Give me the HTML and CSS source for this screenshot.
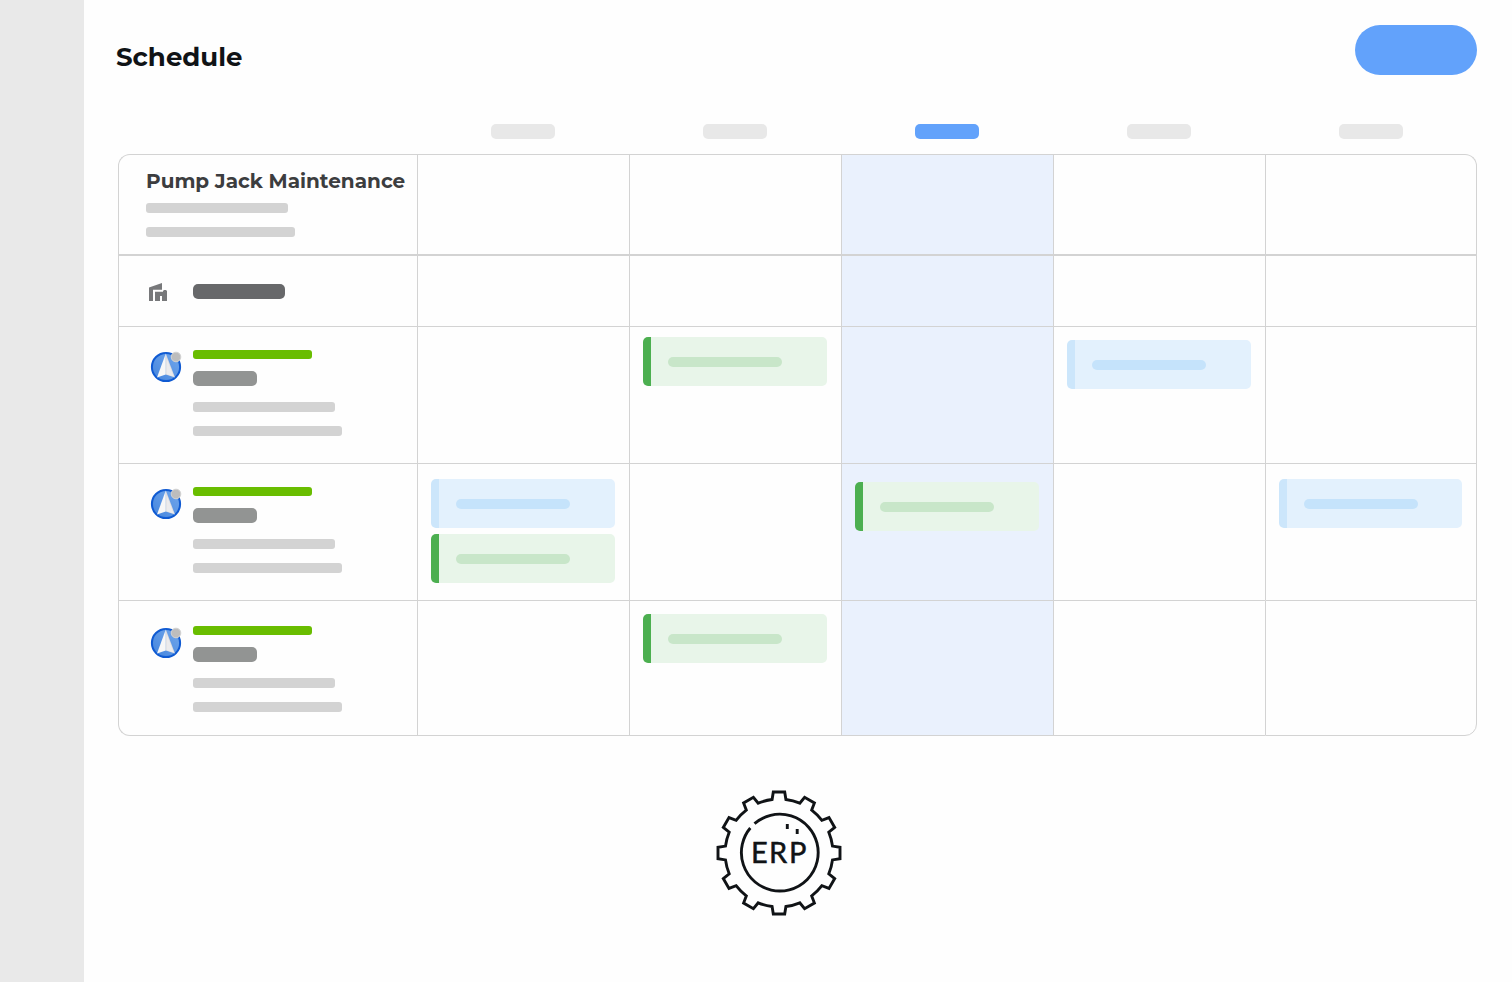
FILE: index.html
```html
<!DOCTYPE html>
<html lang="en">
<head>
    <meta charset="UTF-8">
    <meta name="viewport" content="width=device-width, initial-scale=1.0">
    <title>Schedule</title>
    <link rel="stylesheet" href="styles.css">
</head>
<body>

    <!-- Shared icons -->
    <svg class="sprite" aria-hidden="true">
        <defs>
            <linearGradient id="sky" x1="0" y1="1" x2="1" y2="0">
                <stop offset="0" stop-color="#4384dd"/>
                <stop offset="1" stop-color="#73a8ec"/>
            </linearGradient>
        </defs>
        <symbol id="avatar" viewBox="0 0 32 32">
            <circle cx="16" cy="16" r="14.1" fill="url(#sky)" stroke="#0f5ad2" stroke-width="2"/>
            <path d="M15.8 2.5 L7 26.5 L15.8 23.5 Z" fill="#f7f7f7"/>
            <path d="M15.8 2.5 L25 26.5 L15.8 23.5 Z" fill="#dcdcdf"/>
            <path d="M16.6 7 L23.8 25.5 L16.6 23.2 Z" fill="#ebebed"/>
            <circle cx="26" cy="6" r="4.8" fill="#bdbdbd" stroke="#d2d2d2" stroke-width="1"/>
        </symbol>
    </svg>

    <div class="layout">
        <aside class="sidebar"></aside>

        <main class="main">
            <header class="header">
                <h1>Schedule</h1>
                <button type="button" class="add-btn" aria-label="Add"></button>
            </header>

            <table class="schedule">
                <thead>
                    <tr>
                        <th class="name-col"></th>
                        <th><span class="day"></span></th>
                        <th><span class="day"></span></th>
                        <th><span class="day active"></span></th>
                        <th><span class="day"></span></th>
                        <th><span class="day"></span></th>
                    </tr>
                </thead>
                <tbody>
                    <tr class="job-row">
                        <td class="job">
                            <h2>Pump Jack Maintenance</h2>
                            <div class="lines">
                                <span class="line"></span>
                                <span class="line long"></span>
                            </div>
                        </td>
                        <td></td>
                        <td></td>
                        <td class="today"></td>
                        <td></td>
                        <td></td>
                    </tr>
                    <tr class="site-row">
                        <td>
                            <div class="site">
                                <svg class="site-icon" viewBox="0 0 18 18" aria-hidden="true">
                                    <path d="M0 4.5 L13 0 V6.7 H4 V18 H0 Z"/>
                                    <path d="M6 8.8 H14 V8 L15 7 H17 L18 8 V18 H13 V13 H11 V18 H6 Z"/>
                                </svg>
                                <span class="site-name"></span>
                            </div>
                        </td>
                        <td></td>
                        <td></td>
                        <td class="today"></td>
                        <td></td>
                        <td></td>
                    </tr>
                    <tr class="crew-row">
                        <td>
                            <div class="crew">
                                <svg class="avatar" aria-hidden="true"><use href="#avatar"/></svg>
                                <div class="crew-info">
                                    <span class="status"></span>
                                    <span class="role"></span>
                                    <div class="lines">
                                        <span class="line"></span>
                                        <span class="line long"></span>
                                    </div>
                                </div>
                            </div>
                        </td>
                        <td></td>
                        <td class="tight"><div class="event green"><span></span></div></td>
                        <td class="today"></td>
                        <td><div class="event blue"><span></span></div></td>
                        <td></td>
                    </tr>
                    <tr class="crew-row">
                        <td>
                            <div class="crew">
                                <svg class="avatar" aria-hidden="true"><use href="#avatar"/></svg>
                                <div class="crew-info">
                                    <span class="status"></span>
                                    <span class="role"></span>
                                    <div class="lines">
                                        <span class="line"></span>
                                        <span class="line long"></span>
                                    </div>
                                </div>
                            </div>
                        </td>
                        <td class="loose">
                            <div class="event blue"><span></span></div>
                            <div class="event green"><span></span></div>
                        </td>
                        <td></td>
                        <td class="today low"><div class="event green"><span></span></div></td>
                        <td></td>
                        <td class="loose"><div class="event blue"><span></span></div></td>
                    </tr>
                    <tr class="crew-row last">
                        <td>
                            <div class="crew">
                                <svg class="avatar" aria-hidden="true"><use href="#avatar"/></svg>
                                <div class="crew-info">
                                    <span class="status"></span>
                                    <span class="role"></span>
                                    <div class="lines">
                                        <span class="line"></span>
                                        <span class="line long"></span>
                                    </div>
                                </div>
                            </div>
                        </td>
                        <td></td>
                        <td><div class="event green"><span></span></div></td>
                        <td class="today"></td>
                        <td></td>
                        <td></td>
                    </tr>
                </tbody>
            </table>

            <footer class="footer">
                <svg class="erp" viewBox="-63 -63 126 126" role="img" aria-label="ERP">
                    <g fill="none" stroke="#101316" stroke-width="2.9">
                        <path d="M-6.9-53.5 L-5.7-61 H5.7 L6.9-53.5
                            A54 54 0 0 1 20.8-49.8 L25.6-55.7 L35.4-50 L32.7-42.9
                            A54 54 0 0 1 42.9-32.7 L50-35.4 L55.7-25.6 L49.8-20.8
                            A54 54 0 0 1 53.5-6.9 L61-5.7 V5.7 L53.5 6.9
                            A54 54 0 0 1 49.8 20.8 L55.7 25.6 L50 35.4 L42.9 32.7
                            A54 54 0 0 1 32.7 42.9 L35.4 50 L25.6 55.7 L20.8 49.8
                            A54 54 0 0 1 6.9 53.5 L5.7 61 H-5.7 L-6.9 53.5
                            A54 54 0 0 1 -20.8 49.8 L-25.6 55.7 L-35.4 50 L-32.7 42.9
                            A54 54 0 0 1 -42.9 32.7 L-50 35.4 L-55.7 25.6 L-49.8 20.8
                            A54 54 0 0 1 -53.5 6.9 L-61 5.7 V-5.7 L-53.5-6.9
                            A54 54 0 0 1 -49.8-20.8 L-55.7-25.6 L-50-35.4 L-42.9-32.7
                            A54 54 0 0 1 -32.7-42.9 L-35.4-50 L-25.6-55.7 L-20.8-49.8
                            A54 54 0 0 1 -6.9-53.5 Z"/>
                        <path d="M-24.5-29.3 A38.4 38.4 0 1 1 -28.7-25"/>
                        <path d="M8.3-29 V-24 M18.2-24 V-19"/>
                    </g>
                    <text x="-28 -10 10" y="10">ERP</text>
                </svg>
            </footer>
        </main>
    </div>

</body>
</html>
```
FILE: styles.css
```css
* {
    margin: 0;
    padding: 0;
    box-sizing: border-box;
}

body {
    background: #fefefe;
    color: #101316;
    font-family: Montserrat, Inter, sans-serif;
}

.sprite {
    position: absolute;
    width: 0;
    height: 0;
}

.layout {
    display: flex;
    min-height: 100vh;
}

.sidebar {
    flex: 0 0 84px;
    background: #e9e9e9;
}

.main {
    flex: 1;
    padding: 25px 35px 40px 34px;
}

/* Header */
.header {
    display: flex;
    justify-content: space-between;
    align-items: flex-end;
    margin-left: -2px;
}

h1 {
    font-size: 26px;
    line-height: 36px;
    font-weight: 700;
}

.add-btn {
    width: 122px;
    height: 50px;
    border: none;
    border-radius: 25px;
    background: #62a2fb;
    cursor: pointer;
}

/* Schedule table */
.schedule {
    width: 100%;
    margin-top: 49px;
    table-layout: fixed;
    border-collapse: separate;
    border-spacing: 0;
}

th {
    height: 30px;
    vertical-align: top;
}

.name-col {
    width: 299px;
}

.day {
    display: block;
    width: 64px;
    height: 15px;
    margin: 0 auto;
    border-radius: 5px;
    background: #e8e8e8;
}

.day.active {
    background: #62a2fb;
}

td {
    padding: 13px 14px 0 13px;
    border-top: 1px solid #d3d3d3;
    border-left: 1px solid #d3d3d3;
    vertical-align: top;
}

td:first-child {
    padding: 0 0 0 27px;
}

td:last-child {
    border-right: 1px solid #d3d3d3;
}

.today {
    background: #eaf1fd;
}

.tight {
    padding-top: 10px;
}

.loose {
    padding-top: 15px;
}

.low {
    padding-top: 18px;
}

.job-row td {
    height: 100px;
}

.job-row td:first-child {
    border-top-left-radius: 12px;
}

.job-row td:last-child {
    border-top-right-radius: 12px;
}

.site-row td {
    height: 72px;
    border-top-width: 2px;
}

.crew-row td {
    height: 137px;
}

.crew-row.last td {
    height: 136px;
    border-bottom: 1px solid #d3d3d3;
}

.crew-row.last td:first-child {
    border-bottom-left-radius: 12px;
}

.crew-row.last td:last-child {
    border-bottom-right-radius: 12px;
}

/* First column */
h2 {
    padding-top: 12px;
    margin-bottom: 8px;
    color: #3c3d3f;
    font-size: 20px;
    line-height: 28px;
    font-weight: 700;
    white-space: nowrap;
}

.lines {
    display: flex;
    flex-direction: column;
    gap: 14px;
}

.line {
    width: 142px;
    height: 10px;
    border-radius: 3px;
    background: #d3d3d3;
}

.line.long {
    width: 149px;
}

.site {
    display: flex;
    gap: 26px;
    padding: 27px 0 0 3px;
}

.site-icon {
    width: 18px;
    height: 18px;
    fill: #77787a;
}

.site-name {
    width: 92px;
    height: 15px;
    margin-top: 1px;
    border-radius: 5px;
    background: #67686a;
}

.crew {
    display: flex;
    gap: 11px;
    padding: 23px 0 0 4px;
}

.last .crew {
    padding-top: 25px;
}

.avatar {
    width: 32px;
    height: 32px;
    margin-top: 1px;
}

.crew-info {
    display: flex;
    flex-direction: column;
}

.status {
    width: 119px;
    height: 9px;
    border-radius: 3px;
    background: #69bd00;
}

.role {
    width: 64px;
    height: 15px;
    margin: 12px 0 16px;
    border-radius: 5px;
    background: #929493;
}

/* Events */
.event {
    height: 49px;
    padding: 20px 0 0 17px;
    border-left: 8px solid;
    border-radius: 5px;
}

.event + .event {
    margin-top: 6px;
}

.event span {
    display: block;
    width: 114px;
    height: 10px;
    border-radius: 5px;
}

.green {
    border-color: #4caf50;
    background: #e8f5e9;
}

.green span {
    background: #c8e6c9;
}

.blue {
    border-color: #cce6fb;
    background: #e3f1fd;
}

.blue span {
    background: #c5e3fb;
}

/* ERP badge */
.footer {
    display: flex;
    justify-content: center;
    margin-top: 54px;
    padding-right: 37px;
}

.erp {
    width: 126px;
    height: 126px;
}

.erp text {
    font-family: Lato, sans-serif;
    font-size: 29px;
    fill: #101316;
    stroke: #101316;
    stroke-width: 0.5px;
}
```
